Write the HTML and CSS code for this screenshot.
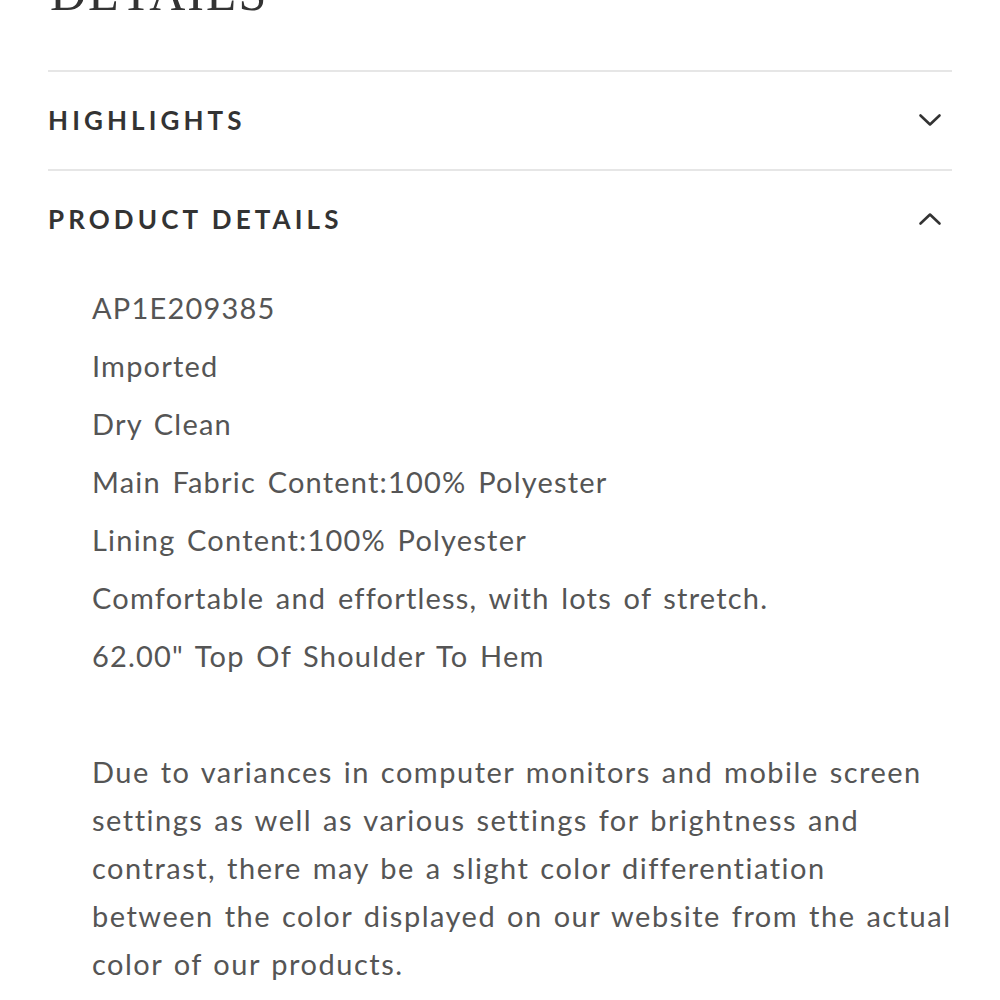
FILE: index.html
```html
<!DOCTYPE html>
<html>
<head>
<meta charset="utf-8">
<link rel="stylesheet" href="styles.css">
</head>
<body>
<div class="page">
  <h2 class="title">DETAILS</h2>
  <section class="acc">
    <div class="acc-head">
      <span class="acc-label">HIGHLIGHTS</span>
      <svg class="chev" width="24" height="14" viewBox="0 0 24 14"><path d="M2.5 2.5 L12 11.5 L21.5 2.5" fill="none" stroke="#333" stroke-width="2.6" stroke-linecap="round" stroke-linejoin="round"/></svg>
    </div>
  </section>
  <section class="acc open">
    <div class="acc-head">
      <span class="acc-label">PRODUCT DETAILS</span>
      <svg class="chev" width="24" height="14" viewBox="0 0 24 14"><path d="M2.5 11.5 L12 2.5 L21.5 11.5" fill="none" stroke="#333" stroke-width="2.6" stroke-linecap="round" stroke-linejoin="round"/></svg>
    </div>
    <div class="acc-body">
      <ul class="specs">
        <li>AP1E209385</li>
        <li>Imported</li>
        <li>Dry Clean</li>
        <li>Main Fabric Content:100% Polyester</li>
        <li>Lining Content:100% Polyester</li>
        <li>Comfortable and effortless, with lots of stretch.</li>
        <li>62.00" Top Of Shoulder To Hem</li>
      </ul>
      <p class="note">Due to variances in computer monitors and mobile screen<br>settings as well as various settings for brightness and<br>contrast, there may be a slight color differentiation<br>between the color displayed on our website from the actual<br>color of our products.</p>
    </div>
  </section>
</div>
</body>
</html>
```
FILE: styles.css
```css
html, body {
  margin: 0;
  padding: 0;
  background: #fff;
}
.page {
  padding: 0 48px;
  overflow: hidden;
  height: 1000px;
  box-sizing: border-box;
}
.title {
  font-family: "Liberation Serif", serif;
  font-weight: normal;
  font-size: 50px;
  line-height: 1;
  letter-spacing: 2px;
  color: #333;
  margin: -32px 0 52px 2px;
}
.acc {
  border-top: 2px solid #e6e6e6;
}
.acc-head {
  height: 97px;
  display: flex;
  align-items: center;
  justify-content: space-between;
  padding-bottom: 1px;
  box-sizing: border-box;
}
.acc-label {
  font-family: "Lato", sans-serif;
  font-weight: 700;
  font-size: 26px;
  letter-spacing: 4.1px;
  color: #333;
}
.chev {
  margin-right: 10px;
}
.acc-body {
  padding: 11px 0 0 44px;
}
.specs {
  list-style: none;
  margin: 0;
  padding: 0;
  font-family: "Lato", sans-serif;
  font-size: 29px;
  line-height: 58px;
  letter-spacing: 1.2px;
  word-spacing: 3px;
  color: #555;
}
.note {
  margin: 63px 0 0;
  font-family: "Lato", sans-serif;
  font-size: 29px;
  line-height: 48px;
  letter-spacing: 1.5px;
  word-spacing: 2px;
  color: #555;
  white-space: nowrap;
}
```
